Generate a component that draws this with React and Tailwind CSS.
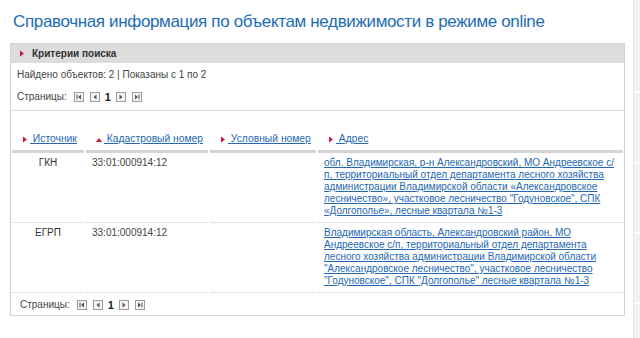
import React from "react";

const font = { fontFamily: '"Liberation Sans", Arial, sans-serif' };

function Tri({ up }) {
  return (
    <svg width="6" height="7" viewBox="0 0 6 7" className="inline-block shrink-0">
      {up ? <path d="M0 6 L3 2 L6 6 Z" fill="#c8173c" /> : <path d="M1 0.5 L5 3.5 L1 6.5 Z" fill="#c8173c" />}
    </svg>
  );
}

function PagerIcon({ kind }) {
  return (
    <svg width="10" height="10" viewBox="0 0 10 10" className="shrink-0">
      <rect x="0.5" y="0.5" width="9" height="9" fill="#f5f5f5" stroke="#9a9a9a" />
      {kind === "first" && <><rect x="2.5" y="2.5" width="1" height="5" fill="#555" /><path d="M7 2.5 L4 5 L7 7.5 Z" fill="#555" /></>}
      {kind === "prev" && <path d="M6.5 2.5 L3.5 5 L6.5 7.5 Z" fill="#555" />}
      {kind === "next" && <path d="M3.5 2.5 L6.5 5 L3.5 7.5 Z" fill="#555" />}
      {kind === "last" && <><path d="M3 2.5 L6 5 L3 7.5 Z" fill="#555" /><rect x="6.5" y="2.5" width="1" height="5" fill="#555" /></>}
    </svg>
  );
}

function Pager() {
  return (
    <div className="flex items-center text-[10px] text-[#444] leading-[12px]">
      <span className="mr-[7px]">Страницы:</span>
      <PagerIcon kind="first" />
      <span className="w-[6px]" />
      <PagerIcon kind="prev" />
      <span className="mx-[5px] font-bold text-[11px] text-[#222]">1</span>
      <PagerIcon kind="next" />
      <span className="w-[6px]" />
      <PagerIcon kind="last" />
    </div>
  );
}

const rows = [
  {
    src: "ГКН",
    cad: "33:01:000914:12",
    addr: "обл. Владимирская, р-н Александровский, МО Андреевское с/\u200bп, территориальный отдел департамента лесного хозяйства администрации Владимирской области «Александровское лесничество», участковое лесничество \"Годуновское\", СПК «Долгополье», лесные квартала №1-3",
  },
  {
    src: "ЕГРП",
    cad: "33:01:000914:12",
    addr: "Владимирская область, Александровский район, МО Андреевское с/п, территориальный отдел департамента лесного хозяйства администрации Владимирской области \"Александровское лесничество\", участковое лесничество \"Годуновское\", СПК \"Долгополье\" лесные квартала №1-3",
  },
];

function HeadCell({ label, up, className }) {
  return (
    <div className={`flex items-center gap-[2px] pt-[22px] pb-[5px] pl-[10px] border-b-[3px] border-[#d4d4d4] ${className}`}>
      <Tri up={up} />
      <a href="#" className="text-[10.3px] text-[#2468b4] underline leading-[12px] whitespace-nowrap">{"\u00a0" + label}</a>
    </div>
  );
}

export default function App() {
  return (
    <div className="flex w-[640px] h-[338px] bg-white overflow-hidden" style={font}>
      <div className="w-[625px] pl-[10px] pt-[11px]">
        <h1 className="pl-[3px] text-[17px] leading-[22px] tracking-[-0.35px] text-[#1d6cb3] mb-[10px]">
          Справочная информация по объектам недвижимости в режиме online
        </h1>
        <div className="border border-[#d2d2d2] text-[10px] text-[#444]">
          <div className="h-[19px] bg-[#dcdcdc] flex items-center pl-[8px] gap-[7px]">
            <Tri />
            <span className="font-bold text-[10px] text-[#333]">Критерии поиска</span>
          </div>
          <div className="px-[6px] pt-[6px] border-b border-[#dedede]">
            <div className="leading-[12px]">Найдено объектов: 2 | Показаны с 1 по 2</div>
            <div className="pt-[10px] pb-[7px]"><Pager /></div>
          </div>
          <div className="px-[1px]">
            <div className="flex gap-[2px]">
              <HeadCell label="Источник" className="w-[72px]" />
              <HeadCell label="Кадастровый номер" up className="w-[122px]" />
              <HeadCell label="Условный номер" className="w-[106px]" />
              <HeadCell label="Адрес" className="flex-1" />
            </div>
            {rows.map((r) => (
              <div key={r.src} className="flex gap-[2px] leading-[12px]">
                <div className="w-[72px] text-center pt-[4px] border-b border-[#e2e2e2] text-[#333]">{r.src}</div>
                <div className="w-[122px] pl-[6px] pt-[4px] border-b border-[#e2e2e2]">{r.cad}</div>
                <div className="w-[106px] border-b border-[#e2e2e2]" />
                <div className="flex-1 pl-[6px] pr-[4px] pt-[4px] pb-[5px] border-b border-[#e2e2e2]">
                  <a href="#" className="text-[#2468b4] underline">{r.addr}</a>
                </div>
              </div>
            ))}
          </div>
          <div className="pl-[9px] pt-[6px] pb-[4px]"><Pager /></div>
        </div>
      </div>
      <div className="w-[8px]" />
      <div className="w-[7px] flex flex-col bg-[#f2f2f2] border-l border-[#e6e6e6]">
        <div className="h-[93px] border-b-2 border-white" />
        <div className="h-[71px] border-b-2 border-white" />
        <div className="h-[70px] border-b-2 border-white" />
        <div className="h-[70px] border-b-2 border-white" />
      </div>
    </div>
  );
}
